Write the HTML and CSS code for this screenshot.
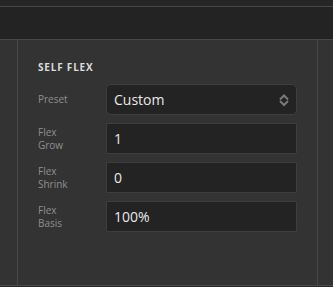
FILE: index.html
```html
<!DOCTYPE html>
<html>
<head>
<meta charset="utf-8">
<link rel="stylesheet" href="styles.css">
</head>
<body>
<div class="topbar"></div>
<div class="toolbar"></div>
<div class="main">
  <div class="side"></div>
  <div class="panel">
    <div class="heading">SELF FLEX</div>
    <div class="rows">
      <div class="row">
        <div class="label">Preset</div>
        <div class="select">
          <span class="value">Custom</span>
          <svg class="chev" width="10" height="14" viewBox="0 0 10 14"><path d="M1 6.5 L5 2.5 L9 6.5 M1 8 L5 12 L9 8" fill="none" stroke="#7a7a7a" stroke-width="2"/></svg>
        </div>
      </div>
      <div class="row">
        <div class="label">Flex<br>Grow</div>
        <div class="input">1</div>
      </div>
      <div class="row">
        <div class="label">Flex<br>Shrink</div>
        <div class="input">0</div>
      </div>
      <div class="row">
        <div class="label">Flex<br>Basis</div>
        <div class="input">100%</div>
      </div>
    </div>
  </div>
  <div class="side"></div>
</div>
</body>
</html>
```
FILE: styles.css
```css
html, body {
  margin: 0;
  padding: 0;
  background: #252525;
  font-family: "Open Sans", "DejaVu Sans", sans-serif;
}
.topbar {
  height: 6px;
  background: #262626;
  border-bottom: 1px solid #474747;
}
.toolbar {
  height: 32px;
  background: #232323;
  border-bottom: 1px solid #474747;
}
.main {
  display: grid;
  grid-template-columns: 17px 1fr 15px;
  height: 245px;
  background: #333333;
  border-bottom: 1px solid #474747;
}
.panel {
  border-left: 1px solid #474747;
  border-right: 1px solid #474747;
  padding: 20px 20px 0 20px;
}
.heading {
  font-size: 10px;
  line-height: 14px;
  font-weight: 700;
  letter-spacing: 0.8px;
  color: #dcdcdc;
  margin-bottom: 10px;
}
.rows {
  display: flex;
  flex-direction: column;
  gap: 8px;
}
.row {
  display: grid;
  grid-template-columns: 68px 1fr;
  align-items: center;
}
.label {
  font-size: 10px;
  line-height: 13px;
  color: #8f8f8f;
}
.select, .input {
  box-sizing: border-box;
  height: 31px;
  background: #232323;
  border: 1px solid #3e3e3e;
  color: #e8e8e8;
  font-size: 14px;
  display: flex;
  align-items: center;
  padding: 0 7px;
}
.select {
  border-radius: 5px;
}
.input {
  border-radius: 1px;
}
.value {
  flex: 1;
}
.chev {
  display: block;
}
```
